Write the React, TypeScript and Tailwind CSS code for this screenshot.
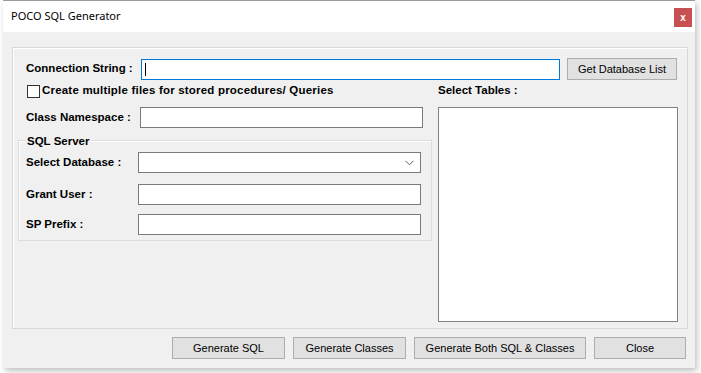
const label = "font-['Liberation_Sans',Arial,sans-serif] text-[11.5px] font-bold text-black";
const ui = "font-['Liberation_Sans',Arial,sans-serif] text-[11px] text-black";

function TextBox({ w, children }: { w: string; children?: React.ReactNode }) {
  return (
    <div className={`${w} h-[21px] bg-white border border-[#7a7a7a] flex items-center`}>
      {children}
    </div>
  );
}

function Btn({ w, text }: { w: string; text: string }) {
  return (
    <div className={`${w} h-[22px] bg-[#e1e1e1] border border-[#adadad] flex items-center justify-center ${ui}`}>
      {text}
    </div>
  );
}

export default function App() {
  return (
    <div className="w-[701px] h-[373px] bg-white overflow-hidden">
      <div className="ml-[3px] w-[692px] h-[368px] bg-[#f0f0f0] border-t border-[#9a9a9a] shadow-[2px_3px_6px_rgba(0,0,0,0.25)] flex flex-col">
        {/* title bar */}
        <div className="h-[31px] bg-white flex items-center justify-between pl-[8px] pr-[3px]">
          <span className="font-['Noto_Sans','Open_Sans',sans-serif] text-[11px] text-black -mt-[1px]">POCO SQL Generator</span>
          <div className="w-[18px] h-[19px] bg-[#c75050] flex items-center justify-center mt-[2px] text-white text-[10px] font-bold font-['Liberation_Sans',sans-serif]">
            x
          </div>
        </div>

        {/* main panel */}
        <div className="mt-[15px] ml-[9px] w-[676px] h-[282px] border border-[#d8d8d8] shadow-[inset_1px_1px_0_#ffffff] flex flex-col">
          <div className="mt-[10px] ml-[13px] h-[22px] flex items-center">
            <span className={`${label} w-[115px]`}>Connection String :</span>
            <TextBox w="w-[419px] !border-[#0078d7]">
              <div className="ml-[3px] w-px h-[13px] bg-black" />
            </TextBox>
            <div className="ml-[7px]">
              <Btn w="w-[110px]" text="Get Database List" />
            </div>
          </div>

          <div className="flex mt-[3px]">
            {/* left column */}
            <div className="ml-[5px] w-[414px] flex flex-col">
              <div className="h-[16px] flex items-center pl-[9px]">
                <div className="w-[13px] h-[13px] bg-white border border-[#333333]" />
                <span className={`${label} ml-[2px] tracking-[0.2px]`}>Create multiple files for stored procedures/ Queries</span>
              </div>
              <div className="mt-[8px] h-[21px] flex items-center pl-[8px]">
                <span className={`${label} w-[114px]`}>Class Namespace :</span>
                <TextBox w="w-[283px]" />
              </div>
              {/* group box */}
              <div className="mt-[12px] w-[414px] h-[101px] border border-[#dcdcdc] shadow-[inset_1px_1px_0_#ffffff] flex flex-col relative">
                <span className={`${label} absolute -top-[8px] left-[6px] px-[2px] bg-[#f0f0f0]`}>SQL Server</span>
                <div className="mt-[11px] h-[21px] flex items-center pl-[7px]">
                  <span className={`${label} w-[112px]`}>Select Database :</span>
                  <div className="w-[283px] h-[21px] bg-white border border-[#7a7a7a] flex items-center justify-end pr-[6px]">
                    <svg width="9" height="6" viewBox="0 0 9 6" fill="none">
                      <path d="M0.5 0.8 L4.5 4.8 L8.5 0.8" stroke="#606060" strokeWidth="1" />
                    </svg>
                  </div>
                </div>
                <div className="mt-[11px] h-[21px] flex items-center pl-[7px]">
                  <span className={`${label} w-[112px]`}>Grant User :</span>
                  <TextBox w="w-[283px]" />
                </div>
                <div className="mt-[9px] h-[21px] flex items-center pl-[7px]">
                  <span className={`${label} w-[112px]`}>SP Prefix :</span>
                  <TextBox w="w-[283px]" />
                </div>
              </div>
            </div>

            {/* right column */}
            <div className="ml-[6px] w-[239px] flex flex-col">
              <div className="h-[16px] flex items-center">
                <span className={label}>Select Tables :</span>
              </div>
              <div className="mt-[8px] w-[240px] h-[215px] bg-white border border-[#828282]" />
            </div>
          </div>
        </div>

        {/* bottom buttons */}
        <div className="mt-[8px] ml-[169px] flex">
          <Btn w="w-[113px]" text="Generate SQL" />
          <div className="ml-[8px]"><Btn w="w-[113px]" text="Generate Classes" /></div>
          <div className="ml-[8px]"><Btn w="w-[172px]" text="Generate Both SQL & Classes" /></div>
          <div className="ml-[8px]"><Btn w="w-[92px]" text="Close" /></div>
        </div>
      </div>
    </div>
  );
}
